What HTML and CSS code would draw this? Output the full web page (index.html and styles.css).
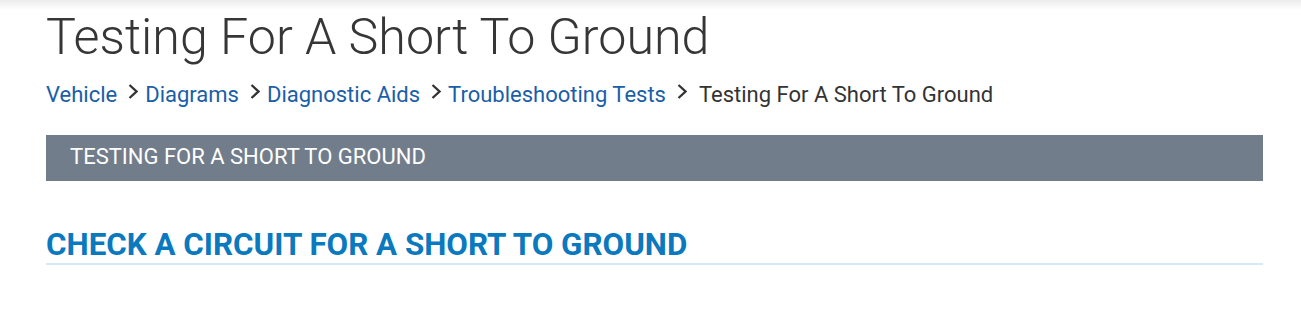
FILE: index.html
```html
<!DOCTYPE html>
<html lang="en">
<head>
    <meta charset="UTF-8">
    <title>Testing For A Short To Ground</title>
    <link rel="stylesheet" href="styles.css">
</head>
<body>
    <div class="topbar"></div>
    <main class="page">
        <h1 class="page-title">Testing For A Short To Ground</h1>

        <!-- breadcrumb trail -->
        <nav class="crumbs">
            <a href="#">Vehicle</a>
            <span class="sep"><svg width="10" height="15" viewBox="0 0 10 15"><path d="M1.5 1 L8.5 7.5 L1.5 14" fill="none" stroke="#333" stroke-width="2.3"/></svg></span>
            <a href="#">Diagrams</a>
            <span class="sep"><svg width="10" height="15" viewBox="0 0 10 15"><path d="M1.5 1 L8.5 7.5 L1.5 14" fill="none" stroke="#333" stroke-width="2.3"/></svg></span>
            <a href="#">Diagnostic Aids</a>
            <span class="sep"><svg width="10" height="15" viewBox="0 0 10 15"><path d="M1.5 1 L8.5 7.5 L1.5 14" fill="none" stroke="#333" stroke-width="2.3"/></svg></span>
            <a href="#">Troubleshooting Tests</a>
            <span class="sep"><svg width="10" height="15" viewBox="0 0 10 15"><path d="M1.5 1 L8.5 7.5 L1.5 14" fill="none" stroke="#333" stroke-width="2.3"/></svg></span>
            <span class="current">Testing For A Short To Ground</span>
        </nav>

        <div class="section-bar">TESTING FOR A SHORT TO GROUND</div>

        <h2 class="section-head">CHECK A CIRCUIT FOR A SHORT TO GROUND</h2>
    </main>
</body>
</html>
```

FILE: styles.css
```css
body {
    margin: 0;
    padding: 0;
    background-color: #fff;
    font-family: 'Roboto', sans-serif;
    color: #333;
}

.topbar {
    height: 10px;
    background: linear-gradient(#ececec, #fff);
}

.page {
    padding: 0 38px 0 46px;
}

.page-title {
    margin: 0;
    font-size: 50.2px;
    font-weight: 300;
    line-height: 54px;
    color: #363636;
}

.crumbs {
    display: flex;
    align-items: flex-start;
    margin-top: 17px;
    font-size: 22px;
    line-height: 28px;
}

.crumbs a {
    color: #1a5ea8;
    text-decoration: none;
}

.crumbs .sep {
    display: flex;
    margin: 3px 7px 0 11px;
}

.crumbs .current {
    margin-left: 5px;
    color: #333;
}

.section-bar {
    margin-top: 26px;
    height: 44px;
    padding: 0 0 2px 24px;
    line-height: 44px;
    background-color: #717d8a;
    color: #fff;
    font-size: 22px;
}

.section-head {
    margin: 47px 0 0;
    padding-bottom: 1px;
    border-bottom: 2px solid #d6e9f5;
    font-size: 31.35px;
    font-weight: 700;
    line-height: 34px;
    color: #0a79be;
}
```
